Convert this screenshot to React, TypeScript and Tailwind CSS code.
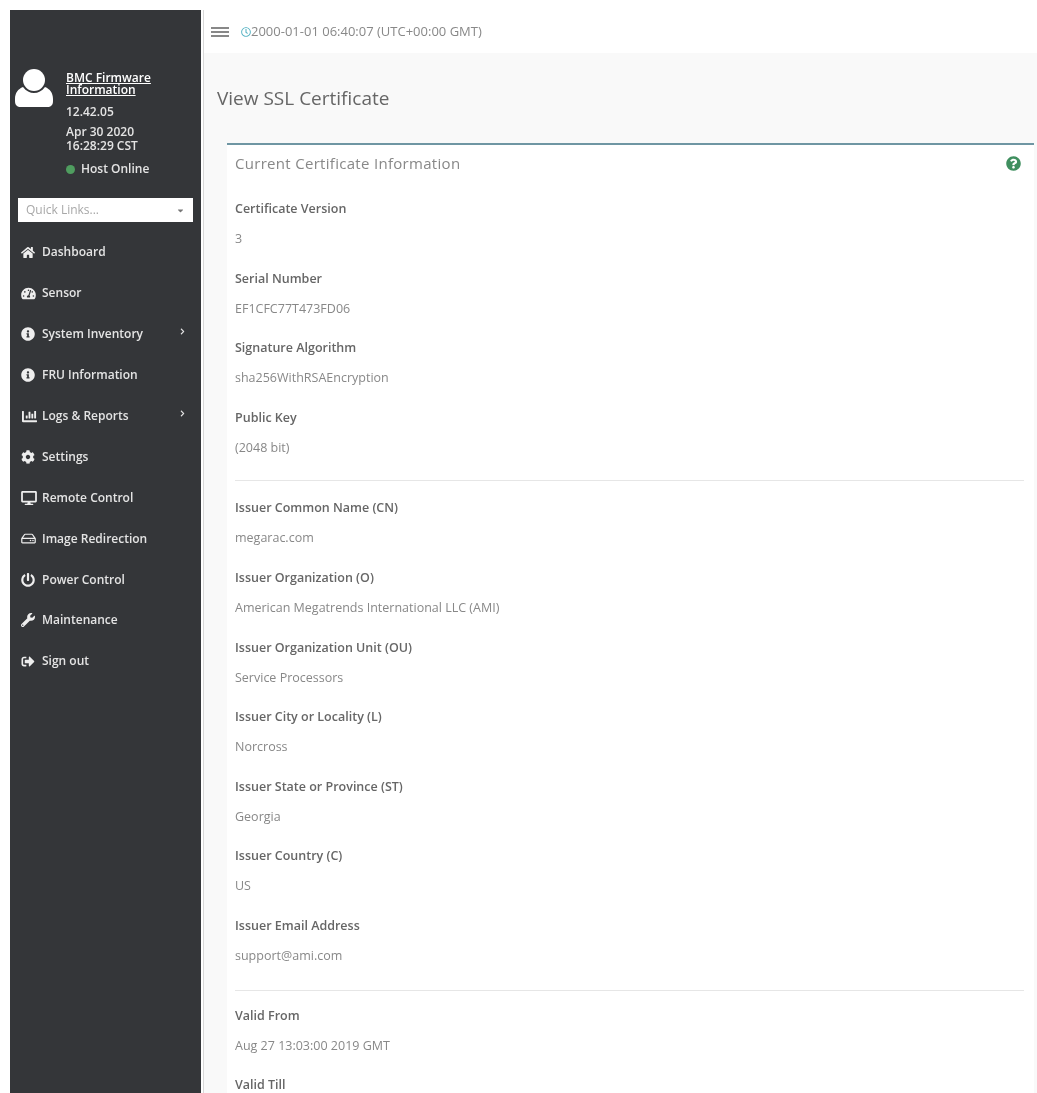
import React from 'react';
import {
  FaHome,
  FaTachometerAlt,
  FaInfoCircle,
  FaChartBar,
  FaCog,
  FaDesktop,
  FaRegHdd,
  FaPowerOff,
  FaWrench,
  FaSignOutAlt,
  FaChevronRight,
  FaCaretDown,
  FaQuestionCircle,
  FaRegClock,
} from 'react-icons/fa';

const navItems = [
  { label: 'Dashboard', icon: FaHome, size: 'h-[13px] w-[14px]' },
  { label: 'Sensor', icon: FaTachometerAlt, size: 'h-[13px] w-[15px]' },
  { label: 'System Inventory', icon: FaInfoCircle, size: 'h-[14px] w-[14px]', arrow: true },
  { label: 'FRU Information', icon: FaInfoCircle, size: 'h-[14px] w-[14px]' },
  { label: 'Logs & Reports', icon: FaChartBar, size: 'h-[15px] w-[17px]', arrow: true },
  { label: 'Settings', icon: FaCog, size: 'h-[14px] w-[14px]' },
  { label: 'Remote Control', icon: FaDesktop, size: 'h-[14px] w-[16px]' },
  { label: 'Image Redirection', icon: FaRegHdd, size: 'h-[13px] w-[15px]' },
  { label: 'Power Control', icon: FaPowerOff, size: 'h-[14px] w-[14px]' },
  { label: 'Maintenance', icon: FaWrench, size: 'h-[14px] w-[14px]' },
  { label: 'Sign out', icon: FaSignOutAlt, size: 'h-[13px] w-[14px]' },
];

const groups = [
  [
    ['Certificate Version', '3'],
    ['Serial Number', 'EF1CFC77T473FD06'],
    ['Signature Algorithm', 'sha256WithRSAEncryption'],
    ['Public Key', '(2048 bit)'],
  ],
  [
    ['Issuer Common Name (CN)', 'megarac.com'],
    ['Issuer Organization (O)', 'American Megatrends International LLC (AMI)'],
    ['Issuer Organization Unit (OU)', 'Service Processors'],
    ['Issuer City or Locality (L)', 'Norcross'],
    ['Issuer State or Province (ST)', 'Georgia'],
    ['Issuer Country (C)', 'US'],
    ['Issuer Email Address', 'support@ami.com'],
  ],
  [
    ['Valid From', 'Aug 27 13:03:00 2019 GMT'],
    ['Valid Till', 'Aug 24 13:03:00 2029 GMT'],
  ],
];

const UserIcon = () => (
  <svg viewBox="0 0 38 38" className="-mt-[3px] h-[38px] w-[38px] shrink-0 fill-white">
    <circle cx="19" cy="11" r="11" />
    <path d="M8 18c3 4 7 6 11 6s8-2 11-6c5 2 8 6 8 12v2c0 4-2 6-6 6H6c-4 0-6-2-6-6v-2c0-6 3-10 8-12z" />
  </svg>
);

const Sidebar = () => (
  <aside className="w-[191px] shrink-0 bg-[#343639] text-[#e4e4e4]">
    <div className="flex pl-[5px] pt-[62px]">
      <UserIcon />
      <div className="ml-[13px] w-[115px] text-[12px] font-semibold leading-[12px]">
        <a className="block text-white underline">
          BMC Firmware
          <br />
          Information
        </a>
        <div className="mt-[10px]">12.42.05</div>
        <div className="mt-[8px]">Apr 30 2020</div>
        <div className="mt-[2px]">16:28:29 CST</div>
        <div className="mt-[11px] flex items-center gap-[6px]">
          <span className="h-[9px] w-[9px] rounded-full bg-[#4f9d5f]" />
          Host Online
        </div>
      </div>
    </div>
    <div className="mx-[8px] mt-[23px] flex h-[24px] items-center justify-between bg-white px-[8px] text-[12px] text-[#a8a8a8]">
      Quick Links...
      <FaCaretDown className="h-[9px] w-[9px] text-[#777]" />
    </div>
    <nav className="mt-[10px]">
      {navItems.map((item) => {
        const Icon = item.icon;
        return (
          <div key={item.label} className="flex h-[40.9px] items-center pl-[11px] pr-[15px] text-[12px] font-semibold">
            <span className="flex w-[21px] shrink-0">
              <Icon className={`${item.size} text-[#eee]`} />
            </span>
            <span>{item.label}</span>
            {item.arrow && <FaChevronRight className="ml-auto mb-[5px] h-[7px] w-[7px]" />}
          </div>
        );
      })}
    </nav>
  </aside>
);

const Field = ({ label, value }: { label: string; value: string }) => (
  <div className="h-[69.6px]">
    <div className="text-[12.5px] font-semibold leading-[18px] text-[#666]">{label}</div>
    <div className="mt-[12px] text-[12.5px] leading-[18px] text-[#888]">{value}</div>
  </div>
);

export default function App() {
  return (
    <div
      className="flex h-[1093px] overflow-hidden bg-white pl-[10px] pt-[10px] blur-[0.6px]"
      style={{ fontFamily: '"Open Sans", "Liberation Sans", sans-serif' }}
    >
      <Sidebar />
      <main className="ml-[2px] flex min-w-0 flex-1 flex-col border-l border-[#d8d8d8]">
        <header className="flex h-[43px] shrink-0 items-center pl-[7px] text-[13px] text-[#888]">
          <span className="flex w-[18px] flex-col gap-[2px]">
            <span className="h-[2px] bg-[#888]" />
            <span className="h-[2px] bg-[#888]" />
            <span className="h-[2px] bg-[#888]" />
          </span>
          <FaRegClock className="ml-[12px] h-[10px] w-[10px] text-[#5bb5c5]" />
          <span>2000-01-01 06:40:07 (UTC+00:00 GMT)</span>
        </header>
        <div className="flex-1 bg-[#f9f9f9] pl-[23px] pr-[3px]">
          <h1 className="-ml-[10px] flex h-[90px] items-center text-[19px] text-[#666]">View SSL Certificate</h1>
          <section className="h-[1000px] border-t-2 border-[#6f96a3] bg-white pl-[8px] pr-[10px]">
            <div className="flex h-[36px] items-center justify-between text-[15px] tracking-[0.3px] text-[#888]">
              Current Certificate Information
              <FaQuestionCircle className="mr-[3px] h-[15px] w-[15px] text-[#3f8f5f]" />
            </div>
            <div className="pt-[19px]">
              {groups.map((group, i) => (
                <div
                  key={i}
                  className={
                    i === 0
                      ? 'mb-[18px] border-b border-[#e6e6e6] pb-[2px]'
                      : i === 1
                        ? 'mb-[16px] border-b border-[#e6e6e6] pb-[3px]'
                        : ''
                  }
                >
                  {group.map(([label, value]) => (
                    <Field key={label} label={label} value={value} />
                  ))}
                </div>
              ))}
            </div>
          </section>
        </div>
      </main>
    </div>
  );
}
